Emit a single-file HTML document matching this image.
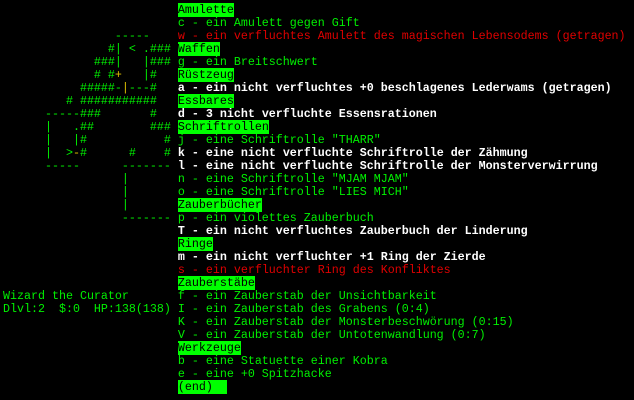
<!DOCTYPE html>
<html><head><meta charset="utf-8"><style>
html,body{margin:0;padding:0;background:#000;width:634px;height:400px;overflow:hidden}
pre{position:absolute;left:3px;top:4px;margin:0;font-family:"Liberation Mono","DejaVu Sans Mono",monospace;font-size:11.67px;line-height:13px;color:#00f000;white-space:pre}
.h{background:#00ff00;color:#000}
.r{color:#e00000}
.w{color:#fff;font-weight:bold}
.y{color:#e0c000}
</style></head><body>
<pre>                         <span class="h">Amulette</span>
                         c - ein Amulett gegen Gift
                -----    <span class="r">w - ein verfluchtes Amulett des magischen Lebensodems (getragen)</span>
               #| &lt; .### <span class="h">Waffen</span>
             ###|   |### g - ein Breitschwert
             # #<span class="y">+</span>   |#   <span class="h">Rüstzeug</span>
           #####-<span class="y">|</span>---#   <span class="w">a - ein nicht verfluchtes +0 beschlagenes Lederwams (getragen)</span>
         # ###########   <span class="h">Essbares</span>
      -----###       #   <span class="w">d - 3 nicht verfluchte Essensrationen</span>
      |   .##        ### <span class="h">Schriftrollen</span>
      |   |#           # j - eine Schriftrolle "THARR"
      |  &gt;<span class="y">-</span>#      #    # <span class="w">k - eine nicht verfluchte Schriftrolle der Zähmung</span>
      -----      ------- <span class="w">l - eine nicht verfluchte Schriftrolle der Monsterverwirrung</span>
                 |       n - eine Schriftrolle "MJAM MJAM"
                 |       o - eine Schriftrolle "LIES MICH"
                 |       <span class="h">Zauberbücher</span>
                 ------- p - ein violettes Zauberbuch
                         <span class="w">T - ein nicht verfluchtes Zauberbuch der Linderung</span>
                         <span class="h">Ringe</span>
                         <span class="w">m - ein nicht verfluchter +1 Ring der Zierde</span>
                         <span class="r">s - ein verfluchter Ring des Konfliktes</span>
                         <span class="h">Zauberstäbe</span>
Wizard the Curator       f - ein Zauberstab der Unsichtbarkeit
Dlvl:2  $:0  HP:138(138) I - ein Zauberstab des Grabens (0:4)
                         K - ein Zauberstab der Monsterbeschwörung (0:15)
                         V - ein Zauberstab der Untotenwandlung (0:7)
                         <span class="h">Werkzeuge</span>
                         b - eine Statuette einer Kobra
                         e - eine +0 Spitzhacke
                         <span class="h">(end)  </span></pre>
</body></html>
